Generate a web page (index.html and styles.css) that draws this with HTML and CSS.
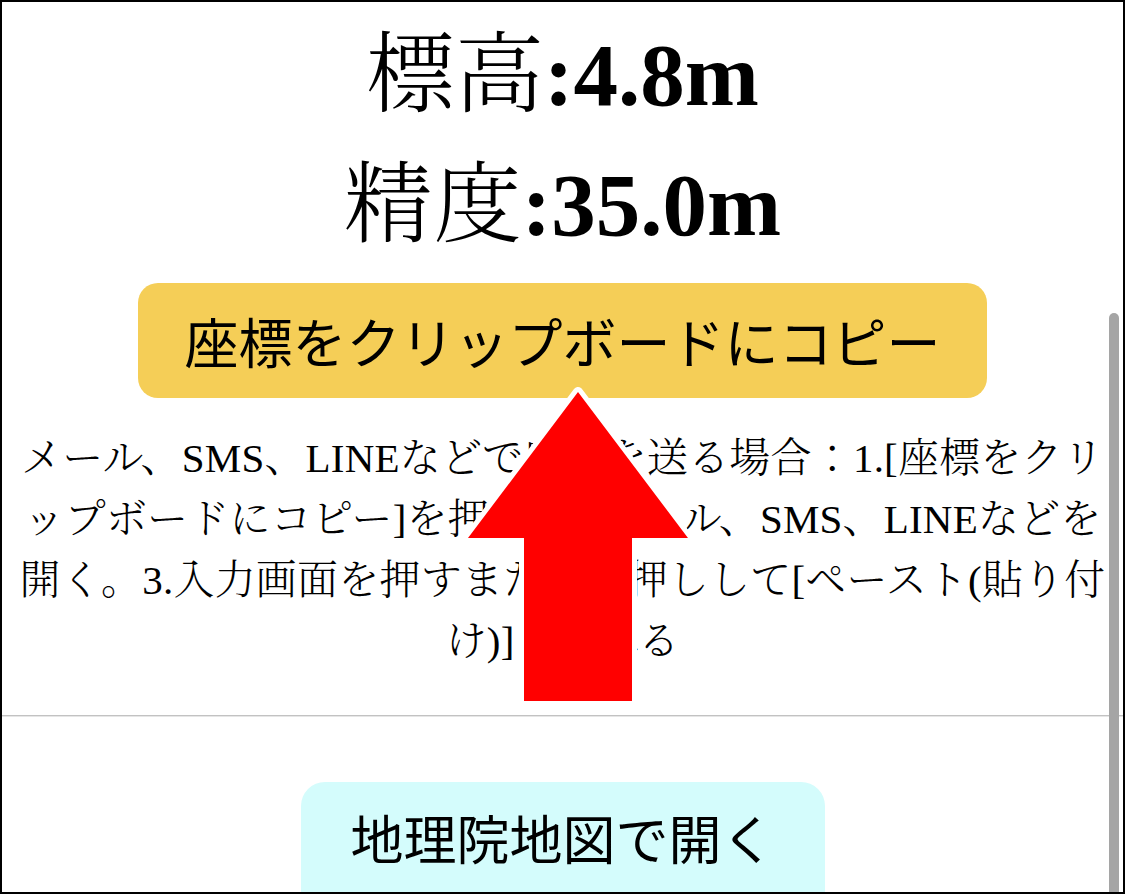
FILE: index.html
```html
<!DOCTYPE html>
<html lang="ja">
<head>
<meta charset="utf-8">
<title>現在地</title>
<link rel="stylesheet" href="styles.css">
</head>
<body>
<div class="frame">
  <main class="page">
    <div class="stat stat-first">標高<b class="num">:4.8m</b></div>
    <div class="stat">精度<b class="num">:35.0m</b></div>
    <button class="btn btn-copy" type="button">座標をクリップボードにコピー</button>
    <p class="howto">メール、SMS、LINEなどで座標を送る場合：1.[座標をクリップボードにコピー]を押す。2.メール、SMS、LINEなどを開く。3.入力画面を押すまたは長押しして[ペースト(貼り付け)]を入れる</p>
    <hr class="divider">
    <button class="btn btn-map" type="button">地理院地図で開く</button>
  </main>
  <div class="scrollbar"></div>
  <svg class="arrow" viewBox="0 0 1125 894" aria-hidden="true">
    <polygon points="578,392 688,538 632,538 632,701 524,701 524,538 468,538" />
  </svg>
</div>
</body>
</html>
```
FILE: styles.css
```css
html, body {
  margin: 0;
  padding: 0;
  background: #ffffff;
}

.frame {
  position: relative;
  width: 1125px;
  height: 894px;
  box-sizing: border-box;
  border: 2px solid #000000;
  overflow: hidden;
  background: #ffffff;
}

.page {
  display: flex;
  flex-direction: column;
  align-items: center;
  text-align: center;
  color: #000000;
  font-family: "Liberation Serif", "Noto Serif CJK JP", "Noto Sans CJK JP", serif;
}

.stat {
  font-size: 89px;
  line-height: 130px;
  font-weight: 300;
  white-space: nowrap;
}

.stat-first {
  margin-top: 8px;
}

.num {
  font-weight: 700;
}

.btn {
  font-family: "Noto Sans CJK JP", "Noto Sans", sans-serif;
  font-weight: 400;
  color: #000000;
  border: 0;
  margin: 0;
  cursor: pointer;
}

.btn-copy {
  margin-top: 13px;
  width: 849px;
  height: 115px;
  padding: 0;
  font-size: 54px;
  line-height: 1;
  border-radius: 20px;
  background: #f5ce57;
}

.howto {
  margin: 30px 0 0;
  width: 1100px;
  font-size: 41px;
  line-height: 61px;
  font-weight: 300;
  letter-spacing: 0.2px;
}

.divider {
  align-self: stretch;
  margin: 43px 0 0;
  height: 0;
  border: 0;
  border-top: 1px solid #c2c2c2;
  border-bottom: 1px solid #e6e6e6;
}

.btn-map {
  margin-top: 65px;
  width: 524px;
  height: 140px;
  padding: 0 0 30px;
  font-size: 53px;
  line-height: 1;
  border-radius: 24px;
  background: #d4fcfc;
}

.scrollbar {
  position: absolute;
  top: 311px;
  right: 4px;
  bottom: -20px;
  width: 10px;
  border-radius: 5px;
  background: #a5a5a5;
}

.arrow {
  position: absolute;
  left: -2px;
  top: -2px;
  width: 1125px;
  height: 894px;
  pointer-events: none;
}

.arrow polygon {
  fill: #ff0000;
  stroke: #ffffff;
  stroke-width: 10;
  stroke-linejoin: round;
  paint-order: stroke fill;
}
```
